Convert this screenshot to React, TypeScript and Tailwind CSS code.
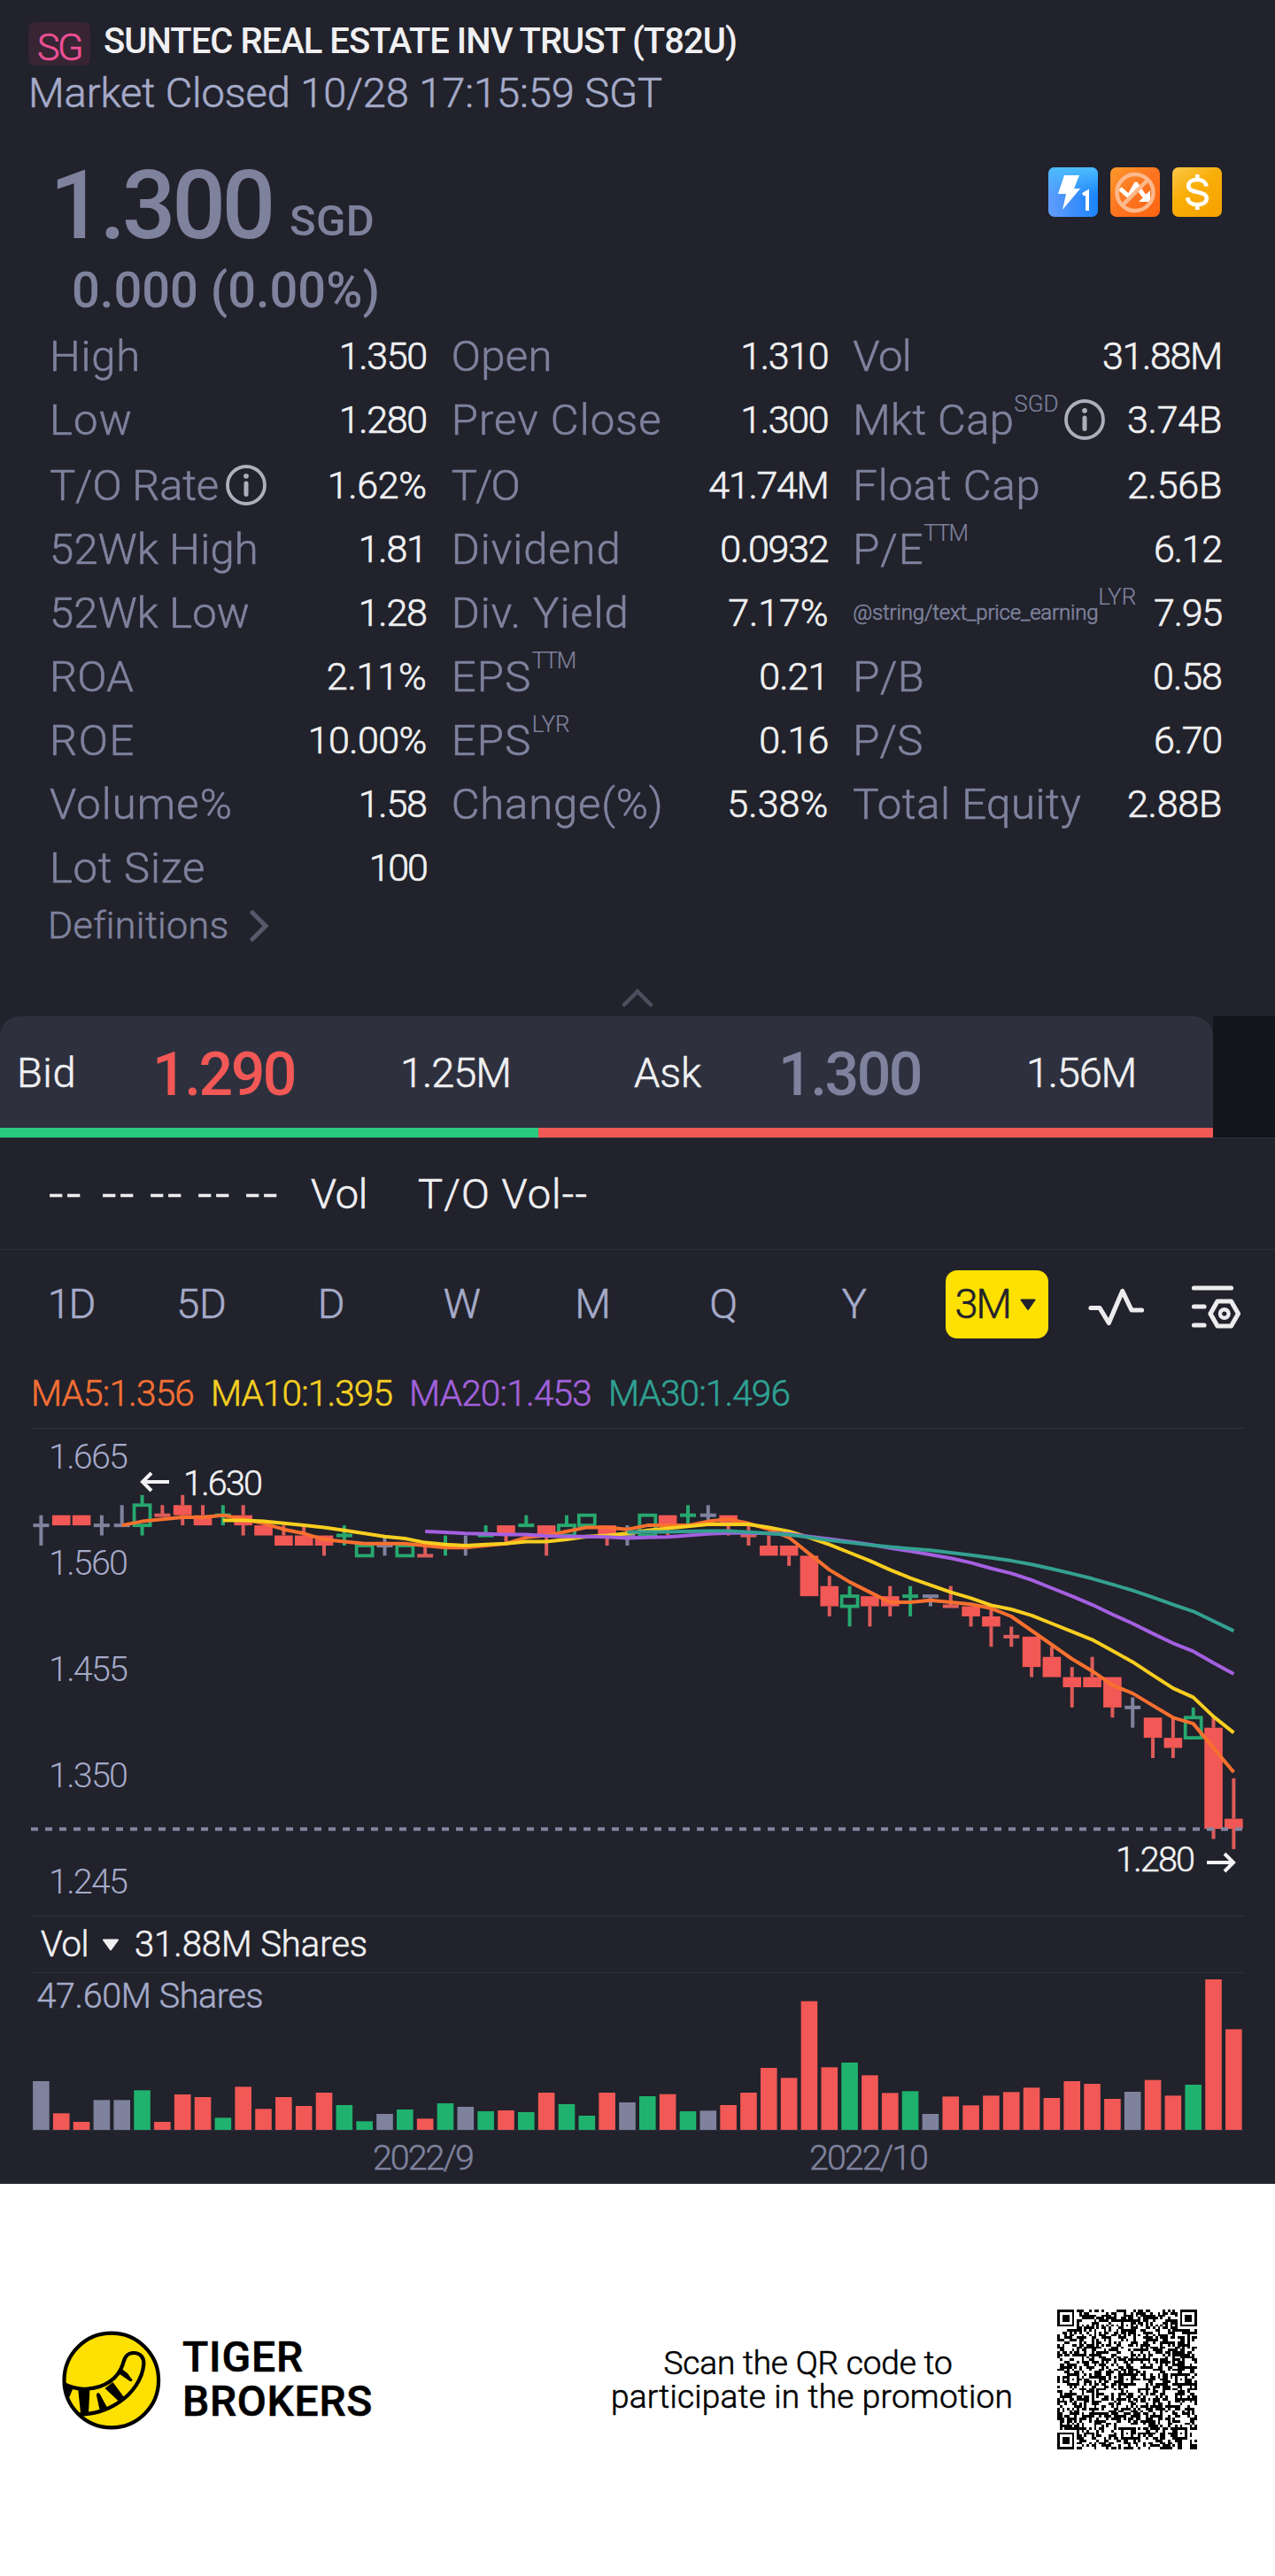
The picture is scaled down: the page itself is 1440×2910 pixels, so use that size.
import { useLayoutEffect, useRef, useState } from "react";

const RED = "#f25855";
const GREEN = "#1fb26e";
const GREY = "#7f829d";

/** One line of text whose tracking is adjusted so that it is exactly `w` pixels wide. */
function Fit({ w, className = "", children }: { w: number; className?: string; children: string }) {
  const ref = useRef<HTMLSpanElement>(null);
  const [spacing, setSpacing] = useState<number | null>(null);
  useLayoutEffect(() => {
    if (spacing === null && ref.current) {
      const natural = ref.current.getBoundingClientRect().width;
      setSpacing((w - natural) / children.length);
    }
  }, [spacing, w, children]);
  return (
    <span
      ref={ref}
      className={"inline-block whitespace-pre " + className}
      style={spacing === null ? undefined : { letterSpacing: spacing + "px" }}
    >
      {children}
    </span>
  );
}

function InfoIcon() {
  return (
    <svg className="size-[46px] shrink-0" viewBox="0 0 46 46" fill="none">
      <circle cx="23" cy="23" r="21" stroke="#adafbd" strokeWidth="3.8" />
      <circle cx="23" cy="12.8" r="2.9" fill="#adafbd" />
      <path d="M23 21v12.5" stroke="#adafbd" strokeWidth="5" strokeLinecap="round" />
    </svg>
  );
}

type Stat = { label: string; w: number; value: string; vw: number; sup?: string; sw?: number; info?: boolean; tiny?: boolean };

const columns: Stat[][] = [
  [
    { label: "High", w: 103, value: "1.350", vw: 99 },
    { label: "Low", w: 94, value: "1.280", vw: 99 },
    { label: "T/O Rate", w: 191, value: "1.62%", vw: 112, info: true },
    { label: "52Wk High", w: 236, value: "1.81", vw: 77 },
    { label: "52Wk Low", w: 226, value: "1.28", vw: 77 },
    { label: "ROA", w: 95, value: "2.11%", vw: 113 },
    { label: "ROE", w: 97, value: "10.00%", vw: 134 },
    { label: "Volume%", w: 207, value: "1.58", vw: 77 },
    { label: "Lot Size", w: 176, value: "100", vw: 65 },
  ],
  [
    { label: "Open", w: 114, value: "1.310", vw: 99 },
    { label: "Prev Close", w: 238, value: "1.300", vw: 99 },
    { label: "T/O", w: 76, value: "41.74M", vw: 135 },
    { label: "Dividend", w: 192, value: "0.0932", vw: 122 },
    { label: "Div. Yield", w: 201, value: "7.17%", vw: 113 },
    { label: "EPS", w: 91, sup: "TTM", sw: 49, value: "0.21", vw: 78 },
    { label: "EPS", w: 91, sup: "LYR", sw: 43, value: "0.16", vw: 78 },
    { label: "Change(%)", w: 240, value: "5.38%", vw: 114 },
  ],
  [
    { label: "Vol", w: 66, value: "31.88M", vw: 135 },
    { label: "Mkt Cap", w: 182, sup: "SGD", sw: 50, value: "3.74B", vw: 107, info: true },
    { label: "Float Cap", w: 212, value: "2.56B", vw: 107 },
    { label: "P/E", w: 80, sup: "TTM", sw: 49, value: "6.12", vw: 77 },
    { label: "@string/text_price_earning", w: 277, sup: "LYR", sw: 43, tiny: true, value: "7.95", vw: 77 },
    { label: "P/B", w: 81, value: "0.58", vw: 78 },
    { label: "P/S", w: 79, value: "6.70", vw: 77 },
    { label: "Total Equity", w: 258, value: "2.88B", vw: 107 },
  ],
];

function StatRow({ s, index }: { s: Stat; index: number }) {
  return (
    <div className={index === 1 ? "h-[74px]" : "h-[72px]"}>
      <div className="flex h-[72px] items-center">
        <Fit
          w={s.w}
          className={
            s.tiny ? "mt-[2px] ml-px text-[24px] text-[#7f829d]" : "mt-[3px] ml-px text-[49px] text-[#7f829d]"
          }
        >
          {s.label}
        </Fit>
        {s.sup && (
          <Fit w={s.sw!} className="-mt-[34px] text-[26px] text-[#7f829d] [-webkit-text-stroke:0.2px]">
            {s.sup}
          </Fit>
        )}
        {s.info && (
          <span className={s.sup ? "mt-[2px] ml-[7px]" : "mt-[2px] ml-[8px]"}>
            <InfoIcon />
          </span>
        )}
        <Fit w={s.vw} className="mt-[3px] ml-auto text-[43px] text-[#f0f0f2] [-webkit-text-stroke:0.7px]">
          {s.value}
        </Fit>
      </div>
    </div>
  );
}

function Badges() {
  return (
    <div className="mt-[13px] flex gap-[14px]">
      <svg className="size-14" viewBox="0 0 56 56">
        <defs>
          <linearGradient id="blue" x1="0" y1="0.6" x2="1" y2="0.4">
            <stop offset="0" stopColor="#5f9bfb" />
            <stop offset="1" stopColor="#1482fb" />
          </linearGradient>
          <linearGradient id="sky" x1="0" y1="0" x2="0" y2="1">
            <stop offset="0" stopColor="#4dbcfd" />
            <stop offset="0.6" stopColor="#4dbcfd" stopOpacity="0" />
          </linearGradient>
        </defs>
        <rect width="56" height="56" rx="7" fill="url(#blue)" />
        <rect width="56" height="56" rx="7" fill="url(#sky)" />
        <path d="M18 9h17l-6 15h7L16 48l4-18h-9z" fill="#fff" />
        <path d="M39 31l5-3v21" fill="none" stroke="#fff" strokeWidth="4" />
      </svg>
      <svg className="size-14" viewBox="0 0 56 56">
        <defs>
          <linearGradient id="orange" x1="0" y1="0" x2="1" y2="1">
            <stop offset="0" stopColor="#fd9a2b" />
            <stop offset="0.5" stopColor="#fc7420" />
            <stop offset="1" stopColor="#fd6410" />
          </linearGradient>
        </defs>
        <rect width="56" height="56" rx="7" fill="url(#orange)" />
        <path d="M11 24l10 9 8-14 8 12 7 5" fill="none" stroke="#fff" strokeWidth="5" strokeLinejoin="round" />
        <path d="M45 26v13H32z" fill="#fff" />
        <circle cx="28" cy="28.5" r="20.5" fill="none" stroke="#fdb98c" strokeWidth="4.5" />
        <path d="M42.5 14L13.5 43" stroke="#fdb98c" strokeWidth="4.5" />
      </svg>
      <svg className="size-14" viewBox="0 0 56 56">
        <defs>
          <linearGradient id="gold" x1="0" y1="0" x2="0.7" y2="1">
            <stop offset="0" stopColor="#fbc64a" />
            <stop offset="0.5" stopColor="#f9ae08" />
            <stop offset="1" stopColor="#f7a300" />
          </linearGradient>
        </defs>
        <rect width="56" height="56" rx="7" fill="url(#gold)" />
        <path
          d="M38.5 21.5c-.6-4.600-4.700-7.500-10.300-7.500-5.900 0-10 2.900-10 7.100 0 9.600 20.600 4.400 20.600 14 0 4.300-4.300 7.100-10.500 7.100-6.200 0-10.600-3.100-11-8"
          fill="none"
          stroke="#fff"
          strokeWidth="4.600"
        />
        <path d="M28.300 8v7M28.300 41v7" stroke="#fff" strokeWidth="4.600" />
      </svg>
    </div>
  );
}

type Kind = "r" | "g" | "n";
// kind, open, close, high, low, traded volume (bar height in thirds of a pixel)
const candles: [Kind, number, number, number, number, number][] = [
  ["n", 1.6, 1.6, 1.61, 1.58, 165], ["r", 1.61, 1.6, 1.61, 1.6, 56], ["r", 1.61, 1.6, 1.61, 1.6, 27],
  ["n", 1.6, 1.6, 1.61, 1.59, 101], ["n", 1.6, 1.6, 1.62, 1.6, 101], ["g", 1.6, 1.62, 1.63, 1.59, 134],
  ["r", 1.61, 1.61, 1.62, 1.61, 27], ["r", 1.62, 1.61, 1.63, 1.6, 120], ["r", 1.61, 1.6, 1.62, 1.6, 111],
  ["g", 1.61, 1.61, 1.62, 1.6, 41], ["r", 1.61, 1.6, 1.62, 1.59, 146], ["r", 1.6, 1.59, 1.6, 1.59, 71],
  ["r", 1.59, 1.58, 1.6, 1.58, 111], ["r", 1.59, 1.58, 1.6, 1.58, 81], ["r", 1.59, 1.58, 1.59, 1.57, 126],
  ["g", 1.59, 1.59, 1.6, 1.58, 84], ["g", 1.57, 1.58, 1.58, 1.57, 29], ["n", 1.58, 1.58, 1.59, 1.57, 54],
  ["g", 1.57, 1.58, 1.58, 1.57, 69], ["r", 1.57, 1.57, 1.58, 1.57, 38], ["g", 1.58, 1.58, 1.59, 1.57, 90],
  ["n", 1.58, 1.58, 1.59, 1.57, 78], ["g", 1.59, 1.59, 1.6, 1.59, 63], ["r", 1.6, 1.59, 1.6, 1.58, 66],
  ["g", 1.6, 1.6, 1.61, 1.6, 60], ["r", 1.6, 1.59, 1.6, 1.57, 126], ["g", 1.59, 1.6, 1.61, 1.59, 87],
  ["g", 1.6, 1.61, 1.61, 1.6, 48], ["r", 1.6, 1.59, 1.6, 1.58, 126], ["n", 1.59, 1.59, 1.6, 1.58, 93],
  ["g", 1.59, 1.61, 1.61, 1.59, 114], ["r", 1.61, 1.6, 1.61, 1.59, 121], ["g", 1.61, 1.61, 1.62, 1.6, 63],
  ["n", 1.61, 1.61, 1.62, 1.6, 65], ["r", 1.61, 1.6, 1.61, 1.59, 84], ["r", 1.59, 1.59, 1.6, 1.58, 126],
  ["r", 1.58, 1.57, 1.59, 1.57, 210], ["r", 1.58, 1.57, 1.58, 1.56, 176], ["r", 1.57, 1.53, 1.57, 1.53, 436],
  ["r", 1.54, 1.52, 1.55, 1.51, 212], ["g", 1.52, 1.53, 1.54, 1.5, 228], ["r", 1.53, 1.52, 1.53, 1.5, 185],
  ["r", 1.53, 1.52, 1.54, 1.51, 125], ["g", 1.53, 1.53, 1.54, 1.51, 131], ["n", 1.53, 1.53, 1.53, 1.52, 54],
  ["r", 1.52, 1.52, 1.54, 1.52, 113], ["r", 1.52, 1.51, 1.52, 1.5, 83], ["r", 1.51, 1.5, 1.52, 1.48, 116],
  ["r", 1.49, 1.49, 1.5, 1.48, 128], ["r", 1.49, 1.46, 1.49, 1.45, 143], ["r", 1.47, 1.45, 1.48, 1.45, 108],
  ["r", 1.45, 1.44, 1.46, 1.42, 165], ["r", 1.45, 1.44, 1.47, 1.44, 156], ["r", 1.45, 1.42, 1.45, 1.41, 105],
  ["n", 1.42, 1.42, 1.43, 1.4, 129], ["r", 1.41, 1.39, 1.41, 1.37, 169], ["r", 1.39, 1.38, 1.41, 1.37, 116],
  ["g", 1.39, 1.41, 1.42, 1.39, 153], ["r", 1.4, 1.3, 1.41, 1.29, 510], ["r", 1.31, 1.3, 1.35, 1.28, 341],
];

const cx = (i: number) => 46.4 + i * 22.83;
const py = (p: number) => 453 - (p - 1.3) * 1142.9;

const wickColor = { r: "#dd5c5b", g: "#27a86f", n: "#7f829d" };

function average(n: number) {
  const points: string[] = [];
  for (let i = n - 1; i < candles.length; i++) {
    let sum = 0;
    for (let k = i - n + 1; k <= i; k++) sum += candles[k][2];
    points.push(cx(i).toFixed(1) + "," + py(sum / n).toFixed(1));
  }
  return points.join(" ");
}

function Candle({ i }: { i: number }) {
  const [kind, open, close, high, low] = candles[i];
  const x = cx(i);
  const top = py(Math.max(open, close));
  const bottom = py(Math.min(open, close));
  const color = wickColor[kind];
  return (
    <g>
      {py(high) < top && <rect x={x - 2} y={py(high)} width="4" height={top - py(high)} fill={color} />}
      {py(low) > bottom && <rect x={x - 2} y={bottom} width="4" height={py(low) - bottom} fill={color} />}
      {open === close ? (
        <rect x={x - 9} y={top - 2} width="18" height="4" fill={color} />
      ) : kind === "g" ? (
        <rect x={x - 9} y={top} width="18" height={bottom - top} fill="none" stroke={color} strokeWidth="3.8" />
      ) : (
        <rect x={x - 10.3} y={top} width="20.600" height={bottom - top} fill={RED} />
      )}
    </g>
  );
}

function PriceChart() {
  return (
    <svg className="block h-[551px] w-full" viewBox="0 0 1440 551" fontSize="39.500">
      <path d="M35 .5H1405" stroke="#2e303e" />
      {["1.665", "1.560", "1.455", "1.350", "1.245"].map((t, i) => (
        <text key={t} x="55" y={46 + i * 120} fill="#a5aac9" className="text-[#a5aac9]" textLength="90">
          {t}
        </text>
      ))}
      {candles.map((_, i) => (
        <Candle key={i} i={i} />
      ))}
      <g fill="none" strokeWidth="4" strokeLinejoin="round">
        <polyline points={average(5)} stroke="#f9702f" />
        <polyline points={average(10)} stroke="#f8ce20" />
        <polyline points={average(20)} stroke="#a460e0" />
        <polyline points={average(30)} stroke="#34a092" />
      </g>
      <path d="M35 453.300H1404" stroke="#8385a0" strokeWidth="4" strokeDasharray="8 8" />
      <g fill="none" stroke="#f2f2f4" strokeWidth="4">
        <path d="M191 61H161M171 51l-10 10 10 10" />
        <path d="M1363 491h30M1383 481l10 10-10 10" />
      </g>
      <g fill="#f2f2f4" stroke="#f2f2f4" strokeWidth="0.500">
        <text x="207" y="75.500" textLength="90">1.630</text>
        <text x="1260" y="500.500" textLength="90">1.280</text>
      </g>
    </svg>
  );
}

function VolumeChart() {
  const fills = { r: RED, g: GREEN, n: GREY };
  return (
    <svg className="block h-[239px] w-full" viewBox="0 0 1440 239" fontSize="39.500">
      <path d="M35 .5H1405M35 178.500H1405" stroke="#2e303e" />
      <text x="41.500" y="40" fill="#a5aac9" stroke="#a5aac9" strokeWidth="0.500" textLength="256">47.60M Shares</text>
      {candles.map((c, i) => (
        <rect key={i} x={cx(i) - 9.3} y={178 - c[5] / 3} width="18.600" height={c[5] / 3} fill={fills[c[0]]} />
      ))}
      <g fill={GREY} stroke={GREY} strokeWidth="0.500">
        <text x="421" y="223" textLength="115">2022/9</text>
        <text x="914" y="223" textLength="135">2022/10</text>
      </g>
    </svg>
  );
}

const QR_SIZE = 57;
function qrModules() {
  const centers = [6, 28, 50];
  let seed = 20221028;
  let d = "";
  for (let y = 0; y < QR_SIZE; y++) {
    for (let x = 0; x < QR_SIZE; x++) {
      seed = (Math.imul(seed, 1664525) + 1013904223) >>> 0;
      let dark = ((seed >>> 16) & 1) === 1;
      if (x === 6 || y === 6) dark = (x + y) % 2 === 0;
      for (const ay of centers)
        for (const ax of centers) {
          const r = Math.max(Math.abs(x - ax), Math.abs(y - ay));
          if (r <= 2) dark = r !== 1;
        }
      for (const [fx, fy] of [[3, 3], [QR_SIZE - 4, 3], [3, QR_SIZE - 4]]) {
        const r = Math.max(Math.abs(x - fx), Math.abs(y - fy));
        if (r <= 4) dark = r !== 2 && r !== 4;
      }
      if (dark) d += `M${x} ${y}h1v1h-1z`;
    }
  }
  return d;
}

function TigerLogo() {
  return (
    <svg className="size-[112px] shrink-0" viewBox="0 0 112 112">
      <circle cx="55.800" cy="56" r="53.300" fill="#fee100" stroke="#000" strokeWidth="4.200" />
      <g stroke="#000" strokeWidth="4.200" fill="none" strokeLinejoin="round">
        <path d="M3 60.500C13 65 21 66.500 29 65.500C49 64 63 54 68.500 38.500C70.500 31 72.500 25 81 25C89 25 93 31 92.300 38C91 54 80 70.500 64 81C50 90.500 35 94.500 18 94.500" />
      </g>
      <path d="M1.600 59L12.500 65 7 78 3 68zM18 64H31.500L30 93H21zM38.800 72q2-4 4.300 0L51.500 87.500 43 91.500zM48.500 65L57.500 58 70 75 65 80.500zM60.500 51L67.500 43 74 48 79.500 55.500Q79 58.500 76 56.500L66 49.500z" fill="#000" />
    </svg>
  );
}

function Tab({ w, children }: { w: number; children: string }) {
  return (
    <div className="flex w-[147.500px] justify-center">
      <Fit w={w}>{children}</Fit>
    </div>
  );
}

function Line() {
  return <div className="h-px bg-[#2e303e]" />;
}

export default function App() {
  return (
    <div className="h-[2910px] w-[1440px] overflow-hidden bg-white font-['Roboto',sans-serif] font-light text-[#f0f0f2] [-webkit-text-stroke:0.6px]">
      <main className="h-[2467px] bg-[#21222b]">
        <header className="pt-[25px]">
          <div className="flex h-[49px] items-start pl-[32px]">
            <div className="flex h-[49px] w-[70px] justify-center rounded-[7px] bg-[#372533] text-[43px] leading-[56px] text-[#ee5096]">
              <Fit w={50}>SG</Fit>
            </div>
            <Fit w={715} className="ml-[15px] text-[40px] leading-[44px] font-medium [-webkit-text-stroke:0px]">
              SUNTEC REAL ESTATE INV TRUST (T82U)
            </Fit>
          </div>
          <div className="pl-[32px] text-[47px] leading-[61px] text-[#a5aac9]">
            <Fit w={716}>Market Closed 10/28 17:15:59 SGT</Fit>
          </div>
        </header>

        <section className="mt-[41px] flex h-[112px] justify-between pr-[60px] pl-[56px] font-medium text-[#7f829d] [-webkit-text-stroke:0px]">
          <div className="flex items-baseline leading-[114px]">
            <Fit w={251} className="text-[107px]">1.300</Fit>
            <Fit w={96} className="ml-[20px] -translate-y-[3px] text-[49px]">SGD</Fit>
          </div>
          <Badges />
        </section>
        <div className="h-[77px] pl-[81px] text-[56px] leading-[80px] font-medium text-[#7f829d] [-webkit-text-stroke:0px]">
          <Fit w={348}>0.000 (0.00%)</Fit>
        </div>

        <section className="flex h-[650px] gap-[27px] pr-[60px] pl-[55px]">
          {columns.map((col, c) => (
            <div key={c} className={c === 2 ? "w-[418px]" : "w-[427px]"}>
              {col.map((s, i) => (
                <StatRow key={i} s={s} index={i} />
              ))}
            </div>
          ))}
        </section>

        <div className="flex h-[61px] items-center pl-[54px] text-[43px] text-[#7f829d]">
          <Fit w={204}>Definitions</Fit>
          <svg className="ml-[23px] h-[36px] w-[22px]" viewBox="0 0 22 36" fill="none">
            <path d="M3 3l15 15L3 33" stroke="#585a6b" strokeWidth="5" strokeLinecap="round" />
          </svg>
        </div>
        <div className="flex h-[72px] justify-center pt-[40px]">
          <svg className="h-[22px] w-[36px]" viewBox="0 0 36 22" fill="none">
            <path d="M3 19L18 4l15 15" stroke="#4d4f5e" strokeWidth="4.500" strokeLinecap="round" />
          </svg>
        </div>

        <section className="flex h-[137px]">
          <div className="w-[1370px] bg-[#21222b]">
            <div className="flex h-[126px] items-center rounded-t-[22px] bg-[#2e303e] pt-[2px] text-[47px]">
              <Fit w={67} className="ml-[19px]">Bid</Fit>
              <Fit w={161} className="mt-[3px] ml-[86px] text-[68px] font-medium text-[#f25855] [-webkit-text-stroke:0px]">1.290</Fit>
              <Fit w={125} className="ml-[119px]">1.25M</Fit>
              <Fit w={76} className="ml-[139px]">Ask</Fit>
              <Fit w={161} className="mt-[3px] ml-[87px] text-[68px] font-medium text-[#7f829d] [-webkit-text-stroke:0px]">1.300</Fit>
              <Fit w={124} className="ml-[119px]">1.56M</Fit>
            </div>
            <div className="flex h-[11px]">
              <div className="w-[608px] bg-[#29c97e]" />
              <div className="flex-1 bg-[#f25855]" />
            </div>
          </div>
          <div className="flex-1 bg-[#14141c]" />
        </section>

        <Line />
        <section className="flex h-[125px] items-center pt-[2px] text-[47px]">
          <Fit w={40} className="ml-[55px] text-[58px]">--</Fit>
          <Fit w={40} className="ml-[20px] text-[58px]">--</Fit>
          <Fit w={40} className="ml-[14px] text-[58px]">--</Fit>
          <Fit w={40} className="ml-[14px] text-[58px]">--</Fit>
          <Fit w={40} className="ml-[14px] text-[58px]">--</Fit>
          <Fit w={64} className="ml-[34px]">Vol</Fit>
          <Fit w={192} className="ml-[57px]">T/O Vol--</Fit>
        </section>
        <Line />

        <nav className="flex h-[123px] items-center pl-[6px] text-[47px] text-[#a5aac9]">
          <Tab w={52}>1D</Tab>
          <Tab w={56}>5D</Tab>
          <Tab w={32}>D</Tab>
          <Tab w={43}>W</Tab>
          <Tab w={41}>M</Tab>
          <Tab w={32}>Q</Tab>
          <Tab w={28}>Y</Tab>
          <div className="ml-[29px] flex h-[77px] w-[116px] items-center rounded-[13px] bg-[#fee100] pl-[11px] text-[#21222b]">
            <Fit w={62}>3M</Fit>
            <svg className="ml-[10px] h-[14px] w-[20px]" viewBox="0 0 20 14">
              <path d="M2.500 1.500h15L10 12z" fill="#21222b" stroke="#21222b" strokeWidth="2" strokeLinejoin="round" />
            </svg>
          </div>
          <svg className="mt-[7px] ml-[45px] h-[44px] w-[64px]" viewBox="0 0 64 44" fill="none">
            <path d="M3 22.500h10L23.300 39.500 38.700 3.500 49 25h11.500" stroke="#ececee" strokeWidth="5.200" strokeLinecap="round" strokeLinejoin="round" />
          </svg>
          <svg className="mt-[6px] ml-[52px] h-[52px] w-[56px]" viewBox="0 0 56 52" fill="none" stroke="#ececee" strokeWidth="5.200" strokeLinecap="round" strokeLinejoin="round">
            <path d="M3.500 4h42M3.500 25H15M3.500 46H15M22 33l8-14h15.500l8 14-8 14H30z" />
            <circle cx="37.800" cy="33" r="4.800" strokeWidth="4.400" />
          </svg>
        </nav>

        <div className="flex h-[78px] items-center pl-[35px] text-[40.500px]">
          <Fit w={184} className="text-[#f47035]">MA5:1.356</Fit>
          <Fit w={205} className="ml-[19px] text-[#f5cf22]">MA10:1.395</Fit>
          <Fit w={206} className="ml-[19px] text-[#a261dc]">MA20:1.453</Fit>
          <Fit w={205} className="ml-[19px] text-[#2fa193]">MA30:1.496</Fit>
        </div>

        <PriceChart />
        <div className="mx-[35px] flex h-[64px] items-center border-t border-[#2e303e] pl-[11px] text-[40px]">
          <Fit w={54}>Vol</Fit>
          <svg className="ml-[15px] h-[14px] w-[20px]" viewBox="0 0 20 14">
            <path d="M2 1.500h16L10 12.500z" fill="#f0f0f2" stroke="#f0f0f2" strokeWidth="2" strokeLinejoin="round" />
          </svg>
          <Fit w={263} className="ml-[17px]">31.88M Shares</Fit>
        </div>
        <VolumeChart />
      </main>

      <footer className="flex h-[443px] items-start pt-[142px] text-black">
        <div className="flex pt-[24px] pl-[70px]">
          <TigerLogo />
          <div className="mt-[5px] ml-[24px] flex flex-col items-start text-[48px] leading-[50px] font-medium">
            <Fit w={137}>TIGER</Fit>
            <Fit w={215}>BROKERS</Fit>
          </div>
        </div>
        <div className="mt-[42px] ml-[268px] flex w-[456px] flex-col items-center text-[37px] leading-[38px]">
          <Fit w={326} className="mr-[9px]">Scan the QR code to</Fit>
          <Fit w={454}>participate in the promotion</Fit>
        </div>
        <svg className="ml-[49px] size-[158px]" viewBox="0 0 57 57" shapeRendering="crispEdges">
          <path d={qrModules()} fill="#000" />
        </svg>
      </footer>
    </div>
  );
}
